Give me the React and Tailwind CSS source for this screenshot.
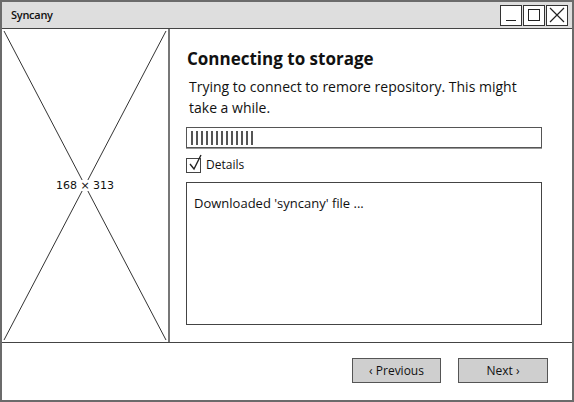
import React from "react";

const font = { fontFamily: '"Comic Sans MS", "Open Sans", "DejaVu Sans", sans-serif' };

export default function App() {
  const bars = Array.from({ length: 13 });
  return (
    <div
      className="w-[574px] h-[402px] bg-white border-2 border-[#6b6b6b] flex flex-col text-[#111] overflow-hidden"
      style={font}
    >
      {/* Title bar */}
      <div className="h-[27px] shrink-0 bg-[#dedede] border-b border-[#444] flex items-center pl-[9px] pr-[4px]">
        <span className="text-[11px] font-semibold flex-1 tracking-tight">Syncany</span>
        <div className="flex gap-[1px]">
          <div className="w-[22px] h-[21px] border border-[#333] bg-white flex items-end justify-center pb-[4px]">
            <div className="w-[10px] h-[1px] bg-[#222]" />
          </div>
          <div className="w-[22px] h-[21px] border border-[#333] bg-white flex items-center justify-center">
            <div className="w-[12px] h-[12px] border border-[#222]" />
          </div>
          <div className="w-[22px] h-[21px] border border-[#333] bg-white flex items-center justify-center">
            <svg width="16" height="16" viewBox="0 0 16 16">
              <path d="M1 1 L15 15 M15 1 L1 15" stroke="#222" strokeWidth="1.2" fill="none" />
            </svg>
          </div>
        </div>
      </div>

      {/* Main */}
      <div className="h-[313px] shrink-0 flex">
        <div className="relative w-[168px] h-full border-r-2 border-[#777] shrink-0">
          <svg className="absolute inset-0" width="166" height="313" viewBox="0 0 166 313">
            <path d="M2 2 L164 311 M164 2 L2 311" stroke="#333" strokeWidth="1" fill="none" />
          </svg>
          <div className="absolute inset-0 flex items-center justify-center">
            <span
              className="bg-white px-[2px] text-[11px] leading-none"
              style={{ fontFamily: '"DejaVu Sans", sans-serif' }}
            >
              168 × 313
            </span>
          </div>
        </div>
        <div className="flex-1 flex flex-col pl-[16px] pr-[30px] pt-[18px]">
          <h1 className="text-[17px] font-bold leading-[24px] pl-[1px]">Connecting to storage</h1>
          <p className="text-[14px] leading-[21px] mt-[5px] pl-[3px] max-w-[340px]">
            Trying to connect to remore repository. This might take a while.
          </p>
          <div className="mt-[9px] h-[21px] border border-[#555] flex items-center gap-[3px] pl-[4px] shadow-[0_1px_0_#999]">
            {bars.map((_, i) => (
              <div key={i} className="w-[2px] h-[14px] bg-[#555]" />
            ))}
          </div>
          <div className="mt-[8px] flex items-center gap-[5px]">
            <div className="w-[15px] h-[15px] border border-[#444] relative">
              <svg className="absolute -top-[5px] left-[1px]" width="16" height="18" viewBox="0 0 16 18">
                <path d="M2 10 L6 15 L13 1" stroke="#222" strokeWidth="1.4" fill="none" />
              </svg>
            </div>
            <span className="text-[12px]">Details</span>
          </div>
          <div className="mt-[8px] h-[143px] border border-[#444] px-[7px] pt-[11px] text-[13px] leading-[18px]">
            Downloaded 'syncany' file ...
          </div>
        </div>
      </div>

      {/* Footer */}
      <div className="flex-1 border-t border-[#444] flex items-start justify-end gap-[17px] pt-[15px] pr-[24px]">
        <button className="w-[89px] h-[25px] bg-[#cfcfcf] border border-[#555] text-[12px] leading-none">
          ‹ Previous
        </button>
        <button className="w-[90px] h-[25px] bg-[#cfcfcf] border border-[#555] text-[12px] leading-none">
          Next ›
        </button>
      </div>
    </div>
  );
}
